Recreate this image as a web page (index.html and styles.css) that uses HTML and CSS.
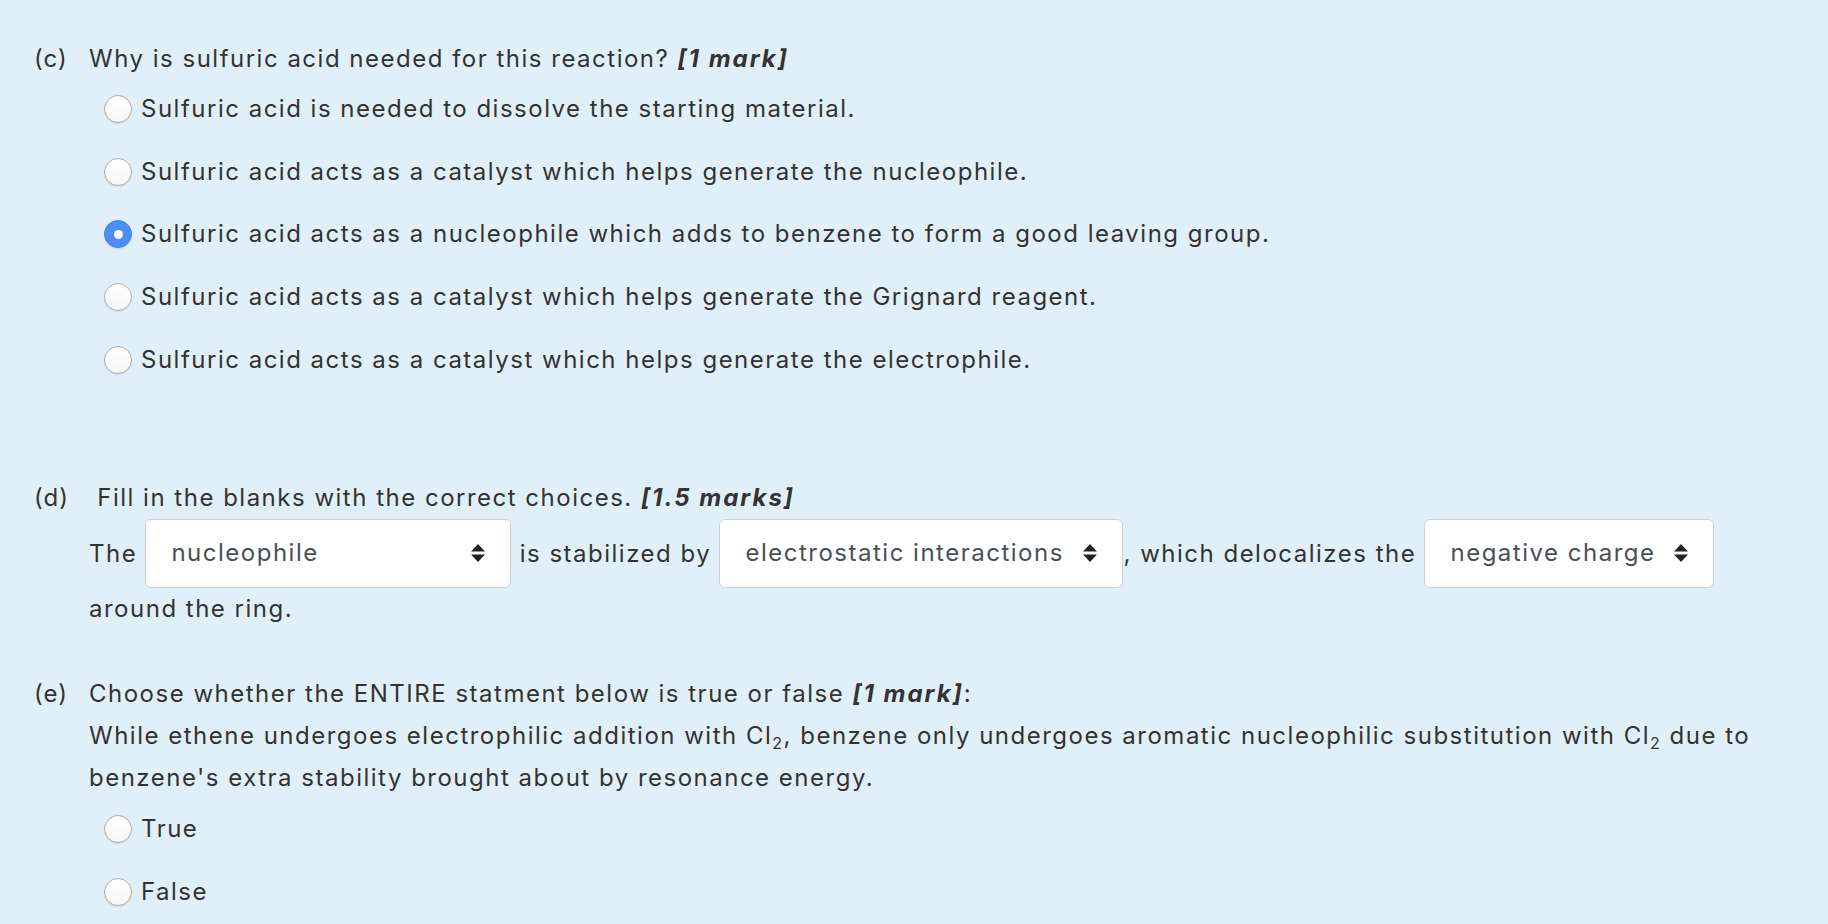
FILE: index.html
```html
<!DOCTYPE html>
<html lang="en">
<head>
<meta charset="utf-8">
<title>Quiz</title>
<link rel="stylesheet" href="styles.css">
</head>
<body>
<main class="page">
  <section class="q q-c">
    <div class="q-label">(c)</div>
    <div class="q-body">
      <p class="q-text">Why is sulfuric acid needed for this reaction? <b><i>[1 mark]</i></b></p>
      <ul class="options">
        <li class="option"><span class="radio"></span><span>Sulfuric acid is needed to dissolve the starting material.</span></li>
        <li class="option"><span class="radio"></span><span>Sulfuric acid acts as a catalyst which helps generate the nucleophile.</span></li>
        <li class="option"><span class="radio checked"></span><span>Sulfuric acid acts as a nucleophile which adds to benzene to form a good leaving group.</span></li>
        <li class="option"><span class="radio"></span><span>Sulfuric acid acts as a catalyst which helps generate the Grignard reagent.</span></li>
        <li class="option"><span class="radio"></span><span>Sulfuric acid acts as a catalyst which helps generate the electrophile.</span></li>
      </ul>
    </div>
  </section>

  <section class="q q-d">
    <div class="q-label">(d)</div>
    <div class="q-body">
      <p class="q-text">&nbsp;Fill in the blanks with the correct choices. <b><i>[1.5 marks]</i></b></p>
      <p class="blanks">The <span class="select w1"><span>nucleophile</span><svg class="arrows" width="16" height="20" viewBox="0 0 16 20"><path d="M8 1 L15 8.5 L1 8.5 Z M1 11.5 L15 11.5 L8 19 Z" fill="#222"/></svg></span> is stabilized by <span class="select w2"><span>electrostatic interactions</span><svg class="arrows" width="16" height="20" viewBox="0 0 16 20"><path d="M8 1 L15 8.5 L1 8.5 Z M1 11.5 L15 11.5 L8 19 Z" fill="#222"/></svg></span>, which delocalizes the <span class="select w3"><span>negative charge</span><svg class="arrows" width="16" height="20" viewBox="0 0 16 20"><path d="M8 1 L15 8.5 L1 8.5 Z M1 11.5 L15 11.5 L8 19 Z" fill="#222"/></svg></span> around the ring.</p>
    </div>
  </section>

  <section class="q q-e">
    <div class="q-label">(e)</div>
    <div class="q-body">
      <p class="q-text">Choose whether the ENTIRE statment below is true or false <b><i>[1 mark]</i></b>:</p>
      <p class="statement">While ethene undergoes electrophilic addition with Cl<sub>2</sub>, benzene only undergoes aromatic nucleophilic substitution with Cl<sub>2</sub> due to benzene's extra stability brought about by resonance energy.</p>
      <ul class="options">
        <li class="option"><span class="radio"></span><span>True</span></li>
        <li class="option"><span class="radio"></span><span>False</span></li>
      </ul>
    </div>
  </section>
</main>
</body>
</html>
```

FILE: styles.css
```css
* { box-sizing: border-box; }
html, body { margin: 0; padding: 0; }
body {
  background: #e1f0f8;
  color: #333;
  font-family: Inter, "Liberation Sans", Arial, sans-serif;
  font-size: 24px;
  line-height: 42px;
  letter-spacing: 1.5px;
  height: 924px;
  overflow: hidden;
}
.page {
  padding: 38px 30px 0 34px;
}
.q {
  display: grid;
  grid-template-columns: 55px 1fr;
}
.q-label { line-height: 42px; letter-spacing: 1px; }
.q-text, .statement, .blanks { margin: 0; }
b i { letter-spacing: 2px; }
.options {
  list-style: none;
  margin: 8px 0 0;
  padding: 0 0 0 15px;
  display: flex;
  flex-direction: column;
  gap: 20.7px;
}
.q-e .options { margin-top: 9px; gap: 21.5px; }
.option {
  display: flex;
  align-items: center;
  gap: 9px;
  height: 42px;
}
.radio {
  width: 28px;
  height: 28px;
  border-radius: 50%;
  background: linear-gradient(#ffffff, #f6f6f6);
  border: 1px solid #adadad;
  box-shadow: 0 1px 1px rgba(0,0,0,0.1);
  flex: none;
  display: flex;
  align-items: center;
  justify-content: center;
}
.radio.checked {
  background: #4a8ef6;
  border-color: #3f84ee;
}
.radio.checked::after {
  content: "";
  width: 9px;
  height: 9px;
  border-radius: 50%;
  background: #fff;
}
.q-d { margin-top: 96px; }
.select {
  display: inline-flex;
  align-items: center;
  justify-content: space-between;
  height: 69px;
  margin: 0;
  padding: 0 25px;
  background: #fff;
  border: 1.5px solid #cbd1d7;
  border-radius: 6px;
  color: #495057;
}
.select.w1 { width: 366px; }
.select.w2 { width: 404px; }
.select.w3 { width: 290px; }
.arrows { flex: none; margin-right: -1px; }
.q-e { margin-top: 43px; }
.statement sub { font-size: 16px; line-height: 0; vertical-align: -5px; }
```
